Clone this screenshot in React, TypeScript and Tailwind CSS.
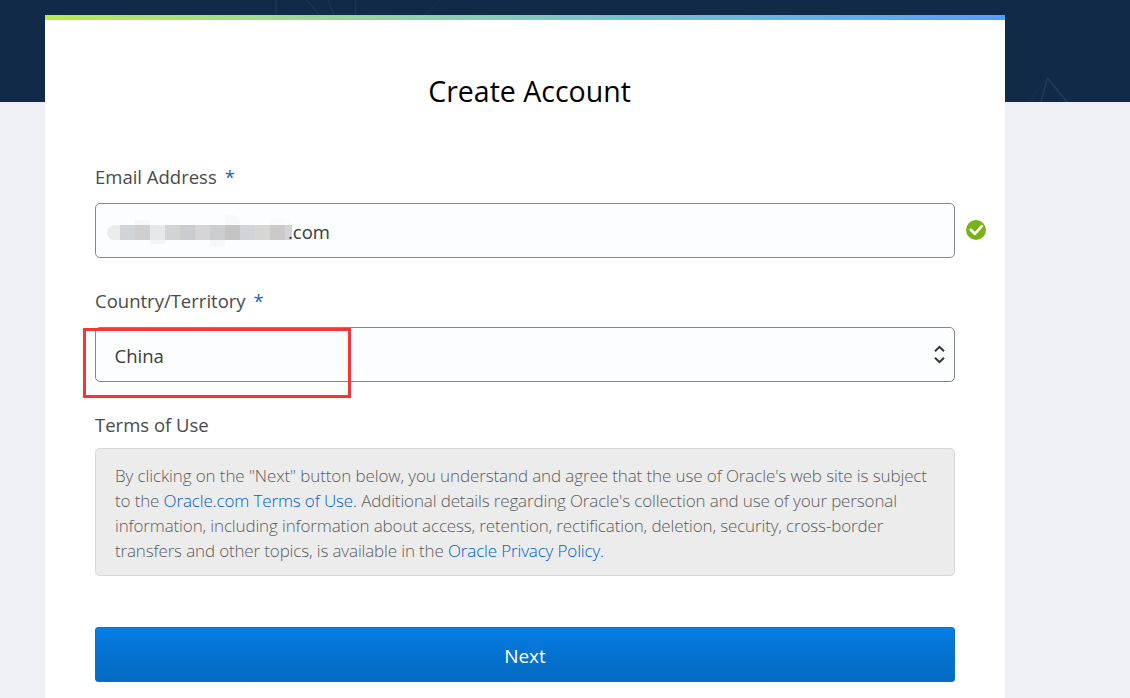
import type { ReactNode } from "react";

const mosaic = [
  "bg-[#ececed] rounded-l-full w-[13px]", "bg-[#d2d3d6] w-[15px]", "bg-[#cfcfcf] w-[15px]", "bg-[#e7e8ea] w-[15px]",
  "bg-[#d4d3d4] w-[15px]", "bg-[#cbccd0] w-[15px]", "bg-[#d5d5d6] w-[15px]", "bg-[#cccdd1] w-[15px]",
  "bg-[#c4c4c3] w-[15px]", "bg-[#d2d3d8] w-[15px]", "bg-[#d6d6d4] w-[15px]", "bg-[#cccac8] w-[15px]", "bg-[#d2d4da] w-[7px]",
];

function Label({ children, required }: { children: ReactNode; required?: boolean }) {
  return (
    <div className="flex h-[28px] items-center whitespace-nowrap text-[18.5px] text-[#4a4a4a]">
      {children}
      {required && <span className="ml-2 text-[#1a65b0]">*</span>}
    </div>
  );
}

function Backdrop() {
  return (
    <svg className="absolute left-0 top-0" width="1130" height="102" fill="none" stroke="#233b57" strokeWidth="1.5">
      <path d="M276 0v15M307 0l12 15M328 0l6 15M355.500 0v15" strokeOpacity=".65" />
      <path d="M441 0l-16 15" strokeOpacity=".3" />
      <path d="M1041 102l6.500-24L1067 102" />
      <path d="M1029 102l18-24" strokeOpacity=".35" />
    </svg>
  );
}

export default function App() {
  return (
    <div className="relative h-[698px] w-[1130px] overflow-hidden bg-[#eff0f5] font-['Open_Sans','Noto_Sans',sans-serif]">
      <div className="absolute inset-x-0 top-0 h-[102px] bg-[#102a47]">
        <Backdrop />
      </div>
      <main className="relative ml-[45px] mt-[15px] h-[683px] w-[960px] bg-white">
        <div className="h-[5px] bg-linear-to-r from-[#b9ea4b] to-[#549dff]" />
        <div className="px-[50px] pt-[49px]">
          <h1 className="ml-[9px] h-[44px] text-center text-[28.5px] leading-[44px] text-black">Create Account</h1>

          <div className="mt-[50px]">
            <Label required>Email Address</Label>
          </div>
          <div className="mt-[12px] flex items-center">
            <div className="flex h-[55px] w-[860px] shrink-0 items-center rounded-[5px] border border-[#858789] bg-[#fcfdff] pl-[11px] text-[18.5px] text-[#3a3a3a]">
              <div className="relative mt-[3px] flex h-[15px]">
                {mosaic.map((c, i) => (
                  <span key={i} className={`block h-[15px] ${c}`} />
                ))}
                <span className="absolute left-[43px] top-[15px] h-[4px] w-[15px] bg-[#f4f5f7]" />
                <span className="absolute left-[103px] top-[15px] h-[6px] w-[15px] bg-[#f6f7f9]" />
                <span className="absolute -top-[11px] left-[118px] h-[11px] w-[15px] rounded-tr-full bg-[#f8f9fb]" />
                <span className="absolute -top-[5px] left-[28px] h-[5px] w-[15px] bg-[#f8f8fa]" />
                <span className="absolute -top-[8px] left-[163px] h-[8px] w-[20px] rounded-t-full bg-[#f9fafc]" />
              </div>
              <span className="relative -ml-[4px] mt-[3px]">.com</span>
            </div>
            <svg className="-mt-px ml-[11px] shrink-0" width="20" height="20" viewBox="0 0 20 20" fill="none">
              <circle cx="10" cy="10" r="10" fill="#77b315" />
              <path d="M4.800 9.800l4 4 7-7.600" stroke="#fff" strokeWidth="2.700" strokeLinecap="round" strokeLinejoin="round" />
            </svg>
          </div>

          <div className="mt-[29px]">
            <Label required>Country/Territory</Label>
          </div>
          <div className="relative mt-[12px] flex h-[55px] items-center justify-between rounded-[5px] border border-[#858789] bg-[#fcfdff] pl-[18.5px] pr-[9px] text-[18.5px] text-[#3a3a3a]">
            <span className="mt-[3px]">China</span>
            <svg width="11" height="19" viewBox="0 0 11 19" fill="none" stroke="#333" strokeWidth="2">
              <path d="M1 6.300l4.500-4.500L10 6.300M1 12.700l4.500 4.500 4.500-4.500" />
            </svg>
            <div className="absolute -left-[13px] top-0 h-[70px] w-[268px] border-[3px] border-[#fa3434]" />
          </div>

          <div className="mt-[29px]">
            <Label>Terms of Use</Label>
          </div>
          <div className="mt-[9px] h-[128px] whitespace-nowrap rounded-[5px] border border-[#d6d8db] bg-[#ececec] pl-[19px] pt-[14px] text-[17px] font-light leading-[25px] text-[#5c5c5c]">
            <p className="tracking-[-0.11px]">By clicking on the "Next" button below, you understand and agree that the use of Oracle's web site is subject</p>
            <p className="tracking-[-0.14px]">to the <a className="text-[#0060cc]">Oracle.com Terms of Use</a>. Additional details regarding Oracle's collection and use of your personal</p>
            <p className="tracking-[-0.145px]">information, including information about access, retention, rectification, deletion, security, cross-border</p>
            <p className="tracking-[-0.15px]">transfers and other topics, is available in the <a className="text-[#0060cc]">Oracle Privacy Policy.</a></p>
          </div>

          <button className="mt-[51px] block h-[55px] w-full rounded-[3px] border border-[#0572ce] bg-linear-to-b from-[#057fe6] via-[#0572d0] to-[#046bc2] pt-[3px] text-[19px] text-white">
            Next
          </button>
        </div>
      </main>
    </div>
  );
}
